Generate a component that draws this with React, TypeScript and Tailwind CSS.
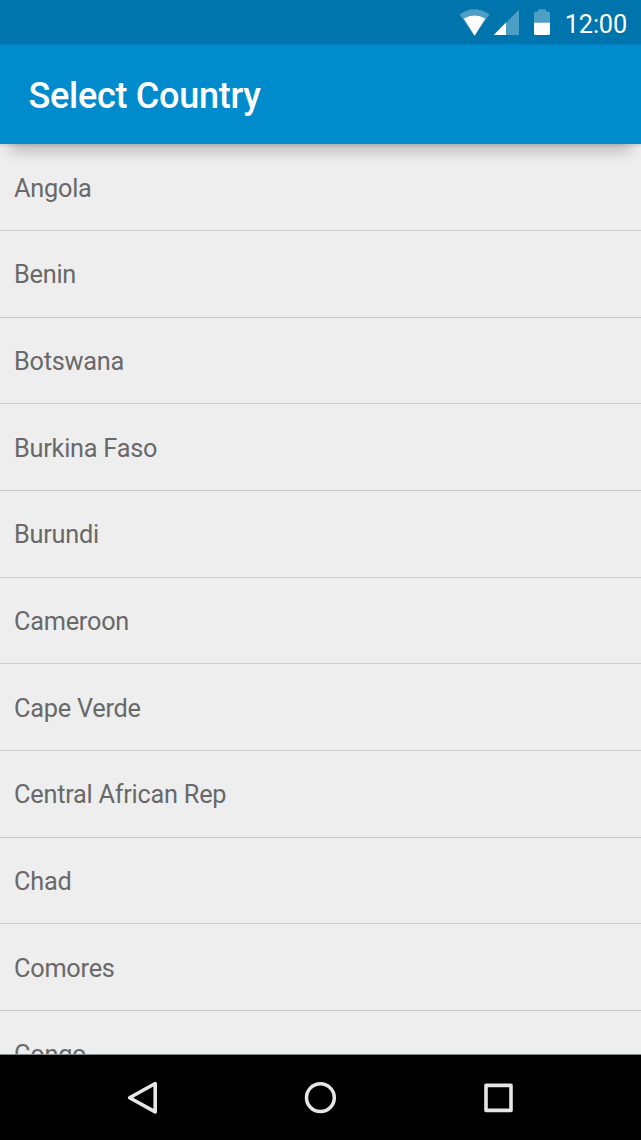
const countries = [
  "Angola",
  "Benin",
  "Botswana",
  "Burkina Faso",
  "Burundi",
  "Cameroon",
  "Cape Verde",
  "Central African Rep",
  "Chad",
  "Comores",
  "Congo",
];

function StatusBar() {
  return (
    <div className="flex h-[44px] shrink-0 justify-end bg-[#0074ac] pr-[14px] text-white">
      <svg width="92" height="44" viewBox="0 0 92 44" fill="#fff" aria-hidden="true">
        <path d="M0.6 14.6Q15.5 4 30.4 14.6L15.5 35.7Z" opacity=".3" />
        <path d="M4.9 18.6Q15.5 12.4 26.3 18.6L15.5 35.7Z" />
        <path d="M60 9.5V35H35Z" opacity=".3" />
        <path d="M47 22.4V35H34.8Z" />
        <path d="M75 23V13Q75 11.4 76.6 11.4H79V9.3H87V11.4H89.4Q91 11.4 91 13V23Z" opacity=".3" />
        <path d="M75 22.8H91V33.4Q91 35 89.4 35H76.6Q75 35 75 33.4Z" />
      </svg>
      <span className="ml-[14px] text-[25.3px] leading-[49px] tracking-[-0.15px]">12:00</span>
    </div>
  );
}

function AppBar() {
  return (
    <header className="relative z-10 flex h-[100px] shrink-0 items-center border-t border-[#0082c0] bg-[#008ccc] pl-[28.5px] pt-[3px]">
      <h1 className="text-[36px] font-medium leading-none tracking-[-0.28px] text-white">Select Country</h1>
      <div className="absolute inset-x-0 top-full h-[20px] overflow-hidden">
        <div className="absolute inset-x-[12px] -top-[22px] h-[22px] shadow-[0_6px_14px_2px_rgba(0,0,0,0.2)]" />
        <div className="h-[4px] bg-gradient-to-b from-black/10 to-transparent" />
      </div>
    </header>
  );
}

function NavigationBar() {
  return (
    <nav className="flex h-[86px] shrink-0 items-center justify-center gap-[138px] border-t border-[#858b88] bg-black pr-[1px]">
      <svg width="40" height="40" viewBox="0 0.5 40 40" fill="none" stroke="#e6e6e6" strokeWidth="3.6" strokeLinejoin="round" aria-label="Back">
        <path d="M33.2 6L7.6 20.2L33.2 34.4Z" />
      </svg>
      <svg width="40" height="40" viewBox="0 0.5 40 40" fill="none" stroke="#e6e6e6" strokeWidth="3.5" aria-label="Home">
        <circle cx="20.4" cy="20.2" r="13.9" />
      </svg>
      <svg width="40" height="40" viewBox="0 0.5 40 40" fill="none" stroke="#e6e6e6" strokeWidth="3.6" strokeLinejoin="round" aria-label="Recent apps">
        <rect x="8" y="7.9" width="25" height="25" />
      </svg>
    </nav>
  );
}

export default function App() {
  return (
    <div className="flex h-[1140px] w-[641px] flex-col overflow-hidden bg-[#eeeeee] font-['Roboto',sans-serif]">
      <StatusBar />
      <AppBar />
      <ul className="min-h-0 flex-1 overflow-hidden pt-[0.4px]">
        {countries.map((name) => (
          <li
            key={name}
            className="flex h-[86.67px] items-center border-b border-[#cbcbcb] pl-[14px] pt-[2.4px] text-[25.3px] leading-none tracking-[-0.24px] text-[#696969]"
          >
            {name}
          </li>
        ))}
      </ul>
      <NavigationBar />
    </div>
  );
}
